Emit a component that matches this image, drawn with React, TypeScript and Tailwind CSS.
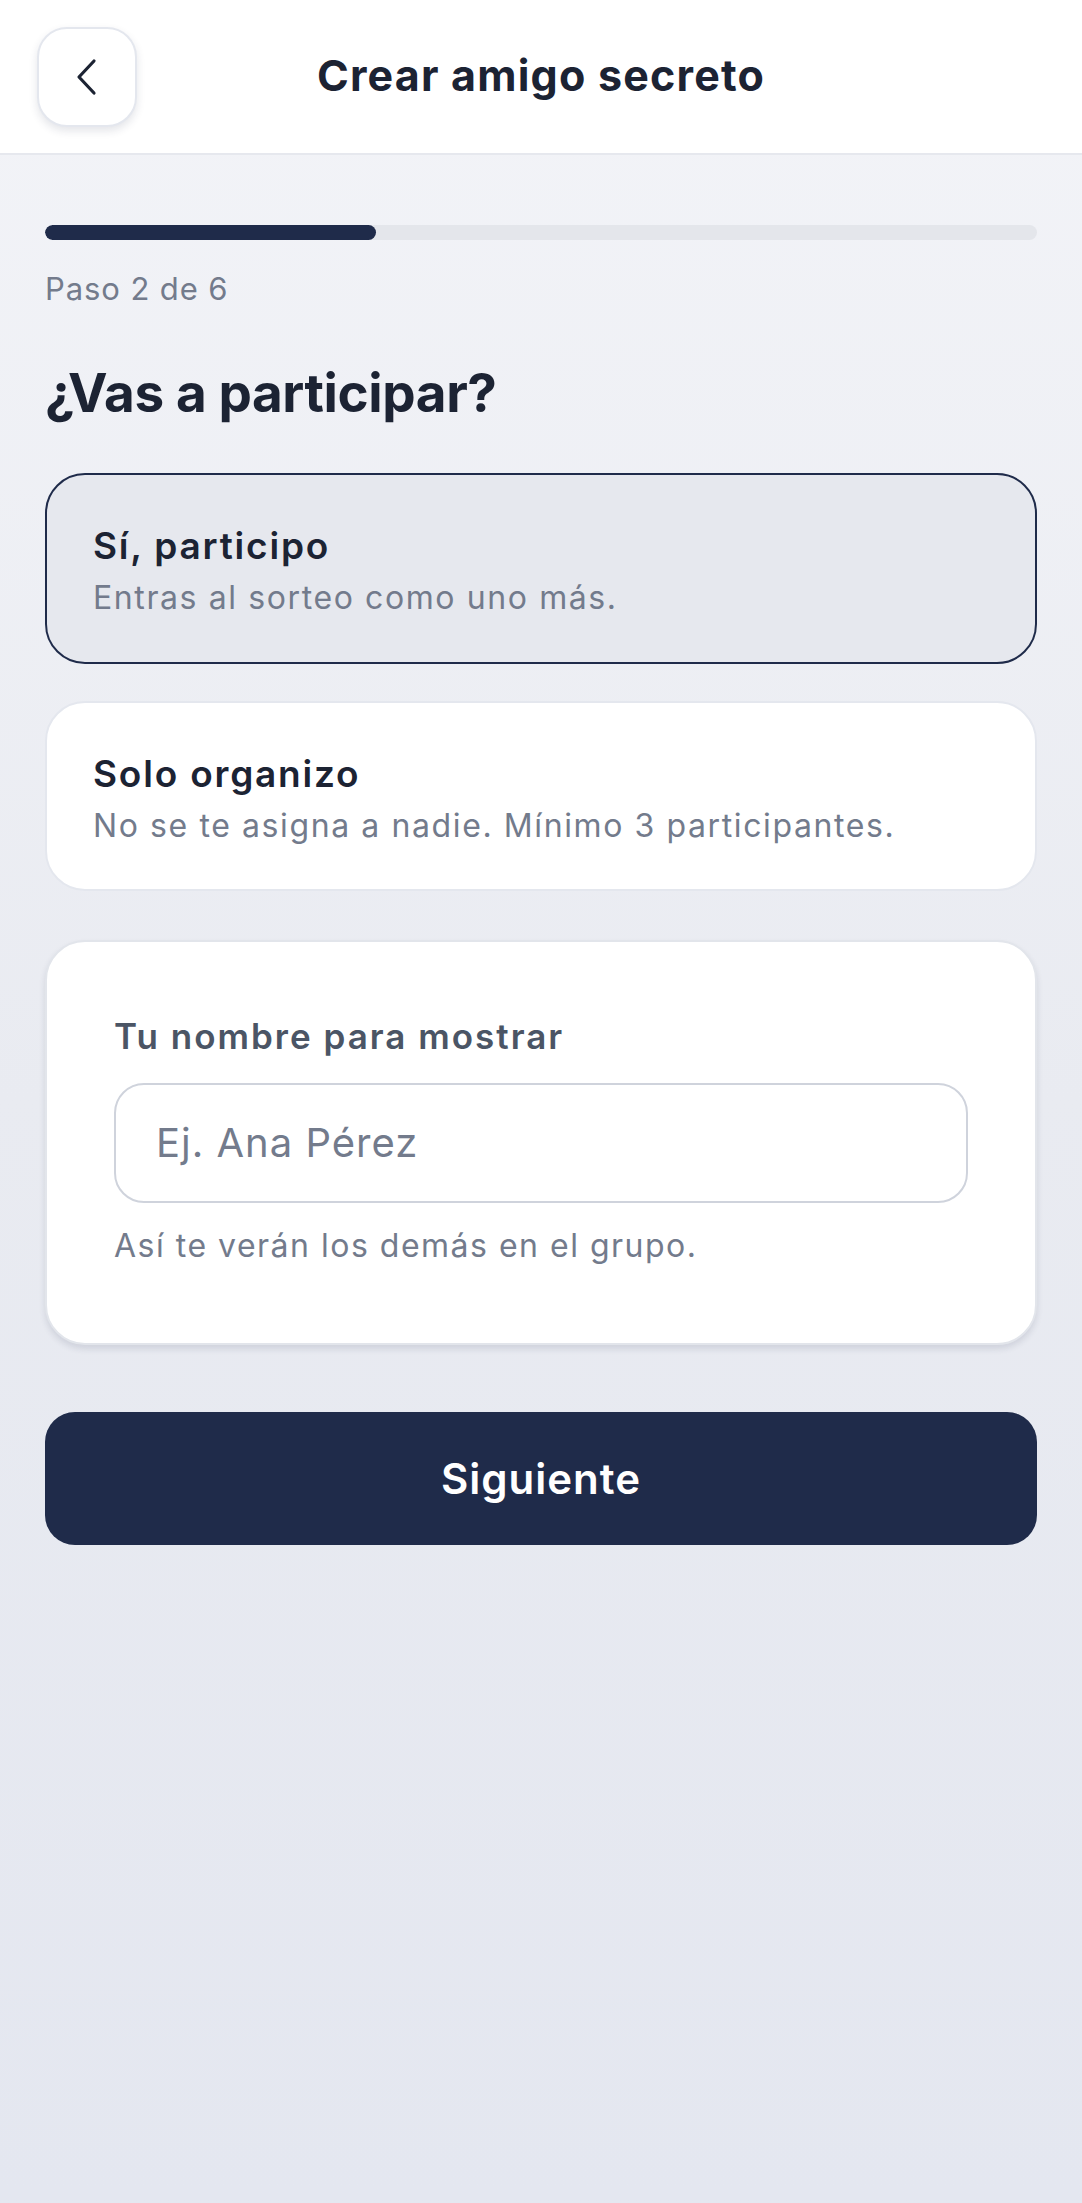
import React from "react";

export default function App() {
  return (
    <div
      className="min-h-[2203px] w-full bg-gradient-to-b from-[#f3f4f8] via-[#e9ebf1] to-[#e4e7f0] text-[#1c2333]"
      style={{ fontFamily: "Inter, 'Noto Sans', sans-serif" }}
    >
      <header className="h-[155px] bg-white border-b-2 border-[#e6e8ee] grid grid-cols-[100px_1fr_100px] items-center px-[37px]">
        <button className="w-[100px] h-[100px] rounded-[30px] bg-white border-2 border-[#e4e7ee] shadow-[0_4px_8px_rgba(30,42,72,0.12)] flex items-center justify-center">
          <svg width="24" height="38" viewBox="0 0 24 38" fill="none">
            <path d="M19 3 L4 19 L19 35" stroke="#1c2333" strokeWidth="3.2" strokeLinecap="round" strokeLinejoin="round" />
          </svg>
        </button>
        <h1 className="text-center text-[43px] leading-[48px] font-bold tracking-[1.2px] mb-[4px]">Crear amigo secreto</h1>
        <div />
      </header>

      <main className="px-[45px] pt-[70px]">
        <div className="h-[15px] w-full rounded-full bg-[#e4e6eb] overflow-hidden">
          <div className="h-full w-1/3 rounded-full bg-[#1f2b4a]" />
        </div>
        <p className="mt-[29px] text-[31px] leading-[40px] tracking-[0.9px] text-[#737b8c]">Paso 2 de 6</p>

        <h2 className="mt-[53px] text-[53px] leading-[62px] font-bold tracking-[-0.4px]">¿Vas a participar?</h2>

        <div className="mt-[49px] h-[191px] rounded-[40px] border-2 border-[#1f2b4a] bg-[#e6e8ee] px-[46px] pt-[51px]">
          <div className="text-[37px] leading-[40px] font-semibold tracking-[1.8px]">Sí, participo</div>
          <div className="mt-[12px] text-[32px] leading-[40px] tracking-[1.6px] text-[#737b8c]">Entras al sorteo como uno más.</div>
        </div>

        <div className="mt-[37px] h-[190px] rounded-[40px] border-2 border-[#e4e7ee] bg-white px-[46px] pt-[51px]">
          <div className="text-[37px] leading-[40px] font-semibold tracking-[1.8px]">Solo organizo</div>
          <div className="mt-[12px] text-[32px] leading-[40px] tracking-[1.6px] text-[#737b8c]">No se te asigna a nadie. Mínimo 3 participantes.</div>
        </div>

        <div className="mt-[49px] rounded-[40px] border-2 border-[#e2e5eb] bg-white shadow-[0_4px_6px_rgba(30,42,72,0.12)] px-[67px] pt-[74px] pb-[77px]">
          <label className="block text-[35px] leading-[40px] font-semibold tracking-[2px] text-[#4b5565]">Tu nombre para mostrar</label>
          <div className="mt-[27px] h-[120px] rounded-[30px] border-2 border-[#cfd3dc] bg-white flex items-center px-[40px]">
            <span className="text-[40px] leading-[46px] tracking-[1px] text-[#737b8c]">Ej. Ana Pérez</span>
          </div>
          <p className="mt-[23px] text-[32px] leading-[40px] tracking-[1.5px] text-[#737b8c]">Así te verán los demás en el grupo.</p>
        </div>

        <button className="mt-[67px] w-full h-[133px] rounded-[30px] bg-[#1f2b4a] text-white text-[42px] leading-[50px] font-semibold tracking-[1px]">
          Siguiente
        </button>
      </main>
    </div>
  );
}
